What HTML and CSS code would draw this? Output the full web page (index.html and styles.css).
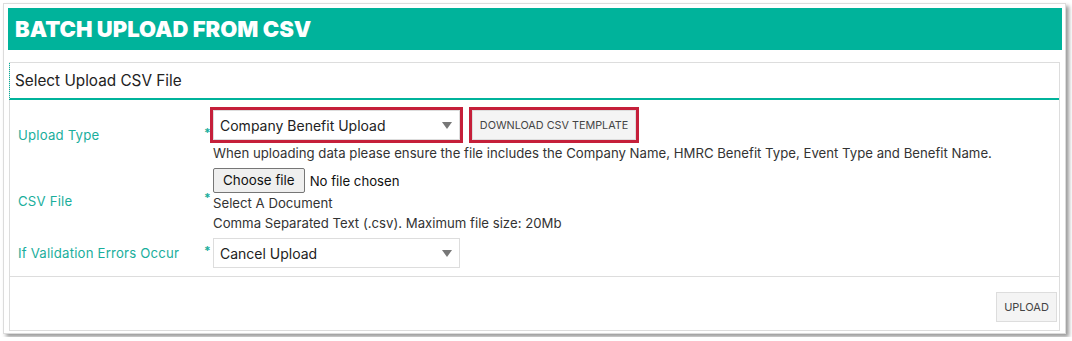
FILE: index.html
```html
<!DOCTYPE html>
<html lang="en">

<head>
  <meta charset="UTF-8">
  <meta name="viewport" content="width=device-width, initial-scale=1.0">
  <title>Batch Upload From CSV</title>
  <link rel="stylesheet" href="styles.css">
</head>

<body>
  <div class="frame">
    <h1 class="page-title">BATCH UPLOAD FROM CSV</h1>

    <div class="panel">
      <div class="panel-heading">Select Upload CSV File</div>

      <div class="panel-body">
        <div class="form-row">
          <label class="field-label">Upload Type</label>
          <span class="required">*</span>
          <div class="field">
            <div class="inline-controls">
              <div class="highlight">
                <div class="select-wrap">
                  <select class="select">
                    <option>Company Benefit Upload</option>
                  </select>
                </div>
              </div>
              <div class="highlight">
                <button class="btn btn-small">DOWNLOAD CSV TEMPLATE</button>
              </div>
            </div>
            <div class="help">When uploading data please ensure the file includes the Company Name, HMRC Benefit Type, Event Type and Benefit Name.</div>
          </div>
        </div>

        <div class="form-row">
          <label class="field-label">CSV File</label>
          <span class="required">*</span>
          <div class="field">
            <label class="file-picker">
              <input type="file" class="file-input">
              <span class="file-button">Choose file</span>
              <span class="file-name">No file chosen</span>
            </label>
            <div class="help">Select A Document</div>
            <div class="help">Comma Separated Text (.csv). Maximum file size: 20Mb</div>
          </div>
        </div>

        <div class="form-row">
          <label class="field-label">If Validation Errors Occur</label>
          <span class="required">*</span>
          <div class="field">
            <div class="select-wrap">
              <select class="select">
                <option>Cancel Upload</option>
              </select>
            </div>
          </div>
        </div>
      </div>

      <div class="panel-footer">
        <button class="btn">UPLOAD</button>
      </div>
    </div>
  </div>
</body>

</html>
```

FILE: styles.css
```css
body {
  font-family: 'Inter', 'Liberation Sans', sans-serif;
  margin: 0;
  background-color: #ffffff;
  color: #333333;
}

.frame {
  margin: 3px;
  width: 1054px;
  height: 322px;
  padding: 4px 3px 3px 4px;
  border: 1px solid #dcdcdc;
  box-shadow: 3px 3px 4px rgba(0, 0, 0, 0.4);
  background-color: #ffffff;
}

.page-title {
  margin: 0;
  height: 42px;
  line-height: 43px;
  padding-left: 7px;
  background-color: #00b39b;
  color: #ffffff;
  font-size: 22px;
  font-weight: 900;
}

.panel {
  margin: 12px 2px 0 1px;
  border: 1px solid #dddddd;
  height: 267px;
}

.panel-heading {
  height: 35px;
  line-height: 35px;
  padding-left: 5px;
  font-size: 15.3px;
  color: #222222;
  border-bottom: 2px solid #00b39b;
  border-left: 1px dotted #00b39b;
  margin-left: -1px;
}

.panel-body {
  padding: 7px 0 8px 8px;
  border-bottom: 1px solid #dddddd;
}

.form-row {
  display: flex;
  align-items: center;
  margin-bottom: 5px;
}

.form-row:last-child {
  margin-bottom: 0;
}

.field-label {
  width: 186px;
  color: #1aae9c;
  font-size: 13.2px;
  letter-spacing: 0.2px;
}

.required {
  width: 9px;
  color: #1aae9c;
  font-size: 12px;
  font-weight: 700;
  margin-top: -6px;
}

.field {
  font-size: 13.2px;
}

.inline-controls {
  display: flex;
  gap: 6px;
  margin-left: -3px;
}

.highlight {
  border: 3px solid #c51f3a;
}

.select-wrap {
  position: relative;
  width: 247px;
}

.select-wrap::after {
  content: '';
  position: absolute;
  right: 8px;
  top: 12px;
  border-left: 5px solid transparent;
  border-right: 5px solid transparent;
  border-top: 7px solid #777777;
  pointer-events: none;
}

.select {
  appearance: none;
  display: block;
  width: 100%;
  height: 30px;
  padding: 0 6px;
  border: 1px solid #dddddd;
  background-color: #ffffff;
  font-family: inherit;
  font-size: 14px;
  color: #222222;
}

.btn {
  height: 30px;
  padding: 0 6px;
  border: 1px solid #dddddd;
  background-color: #f4f4f4;
  color: #444444;
  font-family: inherit;
  font-size: 10.8px;
  white-space: nowrap;
  cursor: pointer;
}

.btn-small {
  display: block;
  width: 164px;
}

.help {
  line-height: 20px;
}

.file-picker {
  display: flex;
  align-items: center;
  gap: 5px;
  height: 25px;
  cursor: pointer;
}

.file-input {
  display: none;
}

.file-button {
  height: 23px;
  line-height: 23px;
  padding: 0 9px;
  border: 1px solid #767676;
  border-radius: 2px;
  background-color: #efefef;
  color: #111111;
  font-size: 13.4px;
}

.file-name {
  color: #111111;
  font-size: 13.2px;
}

.panel-footer {
  display: flex;
  justify-content: flex-end;
  padding: 15px 2px 0 0;
}

.panel-footer .btn {
  width: 61px;
  height: 30px;
  font-size: 11px;
}
```
